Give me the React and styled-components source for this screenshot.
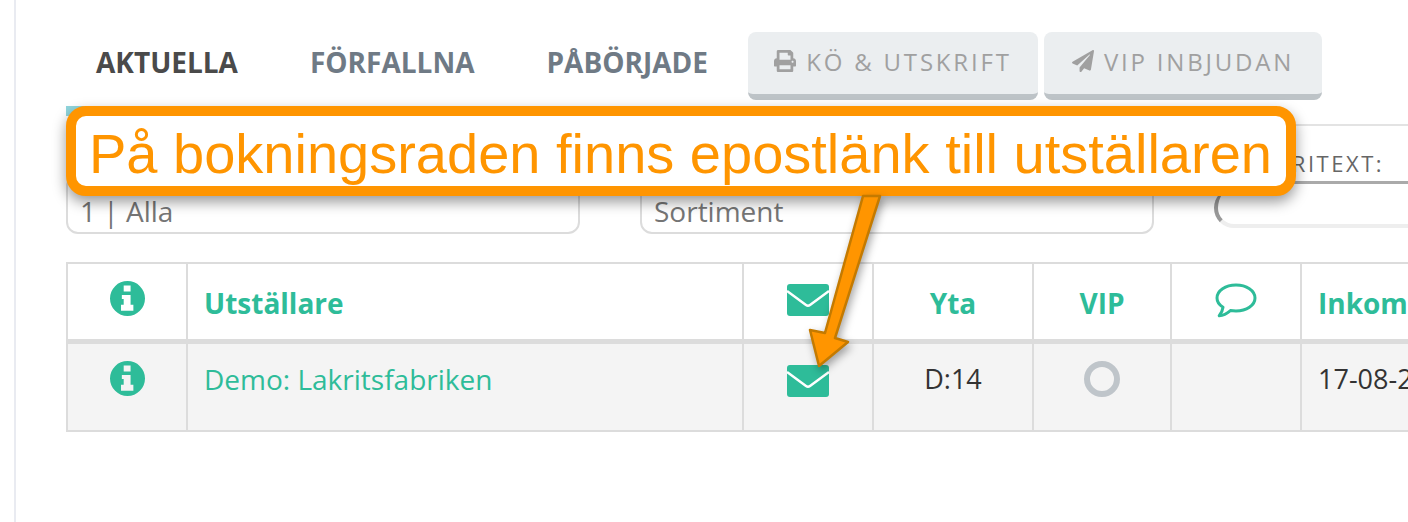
import styled, { createGlobalStyle } from "styled-components";
import { FaPrint, FaPaperPlane } from "react-icons/fa";

const GlobalStyle = createGlobalStyle`
  html, body {
    margin: 0;
    padding: 0;
    background: #fff;
    overflow: hidden;
  }
  body {
    font-family: "Open Sans", "Liberation Sans", sans-serif;
  }
`;

const Page = styled.div`
  position: relative;
  width: 1408px;
  height: 522px;
  overflow: hidden;
  box-sizing: border-box;
  background: #fff;
`;

const Content = styled.div`
  box-sizing: border-box;
  height: 522px;
  width: 1408px;
  margin-left: 14px;
  border-left: 2px solid #e9ebf1;
  padding: 32px 0 0 50px;
`;

const Tabs = styled.div`
  display: flex;
  align-items: flex-start;
  height: 68px;
  padding-left: 30px;
`;

const Tab = styled.div`
  font-size: 28px;
  font-weight: 700;
  line-height: 60px;
  color: ${(p) => (p.$active ? "#4a4a4a" : "#6f7a85")};
  margin-right: ${(p) => p.$gap}px;
`;

const ActionButton = styled.div`
  box-sizing: border-box;
  display: flex;
  align-items: center;
  justify-content: center;
  gap: 10px;
  width: ${(p) => p.$width}px;
  height: 68px;
  margin-right: 6px;
  padding-bottom: 4px;
  background: #ebeef0;
  border-bottom: 6px solid #bdc3c7;
  border-radius: 8px;
  color: #a0a0a0;
  font-size: 24px;
  font-weight: 400;
  letter-spacing: 2.8px;
`;

const Strip = styled.div`
  width: 40px;
  height: 10px;
  margin-top: 6px;
  background: #8fd5dc;
`;

const Filters = styled.div`
  display: flex;
  align-items: flex-start;
  height: 146px;
`;

const SelectBox = styled.div`
  box-sizing: border-box;
  width: 514px;
  height: 60px;
  margin-top: 58px;
  margin-right: 60px;
  padding: 16px 12px 0;
  border: 2px solid #dcdcdc;
  border-radius: 12px;
  background: #fff;
  color: #757575;
  font-size: 28px;
  font-weight: 400;
  line-height: 38px;
`;

const FreeText = styled.div`
  flex: 1;
  margin-top: 8px;
`;

const FreeLabel = styled.div`
  box-sizing: border-box;
  height: 60px;
  padding: 21px 0 0 62px;
  border-top: 2px solid #e3e3e3;
  border-left: 2px solid #e3e3e3;
  border-bottom: 3px solid #aaa;
  color: #666;
  font-size: 22px;
  letter-spacing: 2.5px;
  line-height: 32px;
`;

const FreeInput = styled.div`
  box-sizing: border-box;
  height: 40px;
  margin-top: 4px;
  border-left: 4px solid #999;
  border-bottom: 4px solid #eee;
  border-radius: 20px 0 0 20px;
`;

const Table = styled.table`
  table-layout: fixed;
  width: 1500px;
  border-collapse: collapse;
  background: #fff;
`;

const HeadCell = styled.th`
  box-sizing: border-box;
  height: 78px;
  padding: ${(p) => (p.$left ? "4px 0 0 16px" : "4px 0 0")};
  border: 2px solid #dcdcdc;
  border-bottom: 5px solid #dcdcdc;
  text-align: ${(p) => (p.$left ? "left" : "center")};
  color: #2ebc99;
  font-size: 28px;
  font-weight: 700;
  white-space: nowrap;
`;

const Cell = styled.td`
  box-sizing: border-box;
  height: 90px;
  padding: ${(p) => (p.$left ? "0 0 16px 16px" : "0 0 16px")};
  border: 2px solid #dcdcdc;
  background: #f4f4f4;
  text-align: ${(p) => (p.$left ? "left" : "center")};
  color: ${(p) => (p.$link ? "#2ebc99" : "#333")};
  font-size: ${(p) => (p.$link ? 28 : 27)}px;
  white-space: nowrap;
`;

const Ring = styled.span`
  display: block;
  box-sizing: border-box;
  width: 36px;
  height: 36px;
  margin: 0 auto;
  border: 6px solid #bfc5ca;
  border-radius: 50%;
`;

const IconSvg = styled.svg`
  display: block;
  margin: ${(p) => p.$top || 0}px auto ${(p) => p.$bottom || 0}px;
  fill: #2ebc99;
`;

const Callout = styled.div`
  position: absolute;
  left: 66px;
  top: 106px;
  box-sizing: border-box;
  width: 1230px;
  height: 90px;
  padding-left: 13px;
  background: #fff;
  border: 10px solid #ff9500;
  border-radius: 20px;
  box-shadow: 0 6px 14px rgba(0, 0, 0, 0.4);
  color: #ff9500;
  font-family: "Liberation Sans", Arial, sans-serif;
  font-size: 56px;
  line-height: 76px;
  white-space: nowrap;
`;

const ArrowSvg = styled.svg`
  position: absolute;
  left: 790px;
  top: 190px;
  filter: drop-shadow(2px 4px 4px rgba(0, 0, 0, 0.35));
`;

const InfoIcon = ({ bottom }) => (
  <IconSvg width="35" height="35" viewBox="0 0 34 34" $bottom={bottom}>
    <path
      fillRule="evenodd"
      d="M17 0a17 17 0 1 0 0 34a17 17 0 1 0 0-34zM13.300 4.300h6.700v6h-6.700zM11.500 13.500h8.500v9.500h2.700v6h-12v-6h2.600v-5.500h-1.800z"
    />
  </IconSvg>
);

const MailIcon = ({ top, bottom }) => (
  <IconSvg width="42" height="32" viewBox="0 0 42 32" $top={top} $bottom={bottom}>
    <rect width="42" height="32" rx="3" />
    <path d="M0 7 L19 21 Q21 22.500 23 21 L42 7" fill="none" stroke="#fff" strokeWidth="2.500" />
  </IconSvg>
);

const ChatIcon = () => (
  <IconSvg width="42" height="36" viewBox="0 0 42 36" $bottom={4}>
    <path
      d="M21 2C10.500 2 2 7.600 2 15c0 3.800 2.400 7 6 9.200-.4 3-1.800 6.200-3.800 8.600 4.500-.4 8.600-3 11.200-5.200 1.800.3 3.600.4 5.600.4 10.500 0 19-5.600 19-13S31.500 2 21 2z"
      fill="none"
      stroke="#2ebc99"
      strokeWidth="3"
      strokeLinejoin="round"
    />
  </IconSvg>
);

export default function App() {
  return (
    <Page>
      <GlobalStyle />
      <Content>
        <Tabs>
          <Tab $active $gap={72}>AKTUELLA</Tab>
          <Tab $gap={72}>FÖRFALLNA</Tab>
          <Tab $gap={40}>PÅBÖRJADE</Tab>
          <ActionButton $width={290}>
            <FaPrint size={22} />
            KÖ &amp; UTSKRIFT
          </ActionButton>
          <ActionButton $width={278}>
            <FaPaperPlane size={22} />
            VIP INBJUDAN
          </ActionButton>
        </Tabs>
        <Strip />
        <Filters>
          <SelectBox>1 | Alla</SelectBox>
          <SelectBox>Sortiment</SelectBox>
          <FreeText>
            <FreeLabel>FRITEXT:</FreeLabel>
            <FreeInput />
          </FreeText>
        </Filters>
        <Table>
          <colgroup>
            <col width="120" />
            <col width="556" />
            <col width="130" />
            <col width="160" />
            <col width="138" />
            <col width="130" />
            <col width="266" />
          </colgroup>
          <thead>
            <tr>
              <HeadCell><InfoIcon bottom={10} /></HeadCell>
              <HeadCell $left>Utställare</HeadCell>
              <HeadCell><MailIcon bottom={6} /></HeadCell>
              <HeadCell>Yta</HeadCell>
              <HeadCell>VIP</HeadCell>
              <HeadCell><ChatIcon /></HeadCell>
              <HeadCell $left>Inkommen</HeadCell>
            </tr>
          </thead>
          <tbody>
            <tr>
              <Cell $link><InfoIcon /></Cell>
              <Cell $left $link>Demo: Lakritsfabriken</Cell>
              <Cell $link><MailIcon top={4} /></Cell>
              <Cell>D:14</Cell>
              <Cell><Ring /></Cell>
              <Cell />
              <Cell $left>17-08-25</Cell>
            </tr>
          </tbody>
        </Table>
      </Content>
      <Callout>På bokningsraden finns epostlänk till utställaren</Callout>
      <ArrowSvg width="100" height="190" viewBox="790 190 100 190">
        <polygon
          points="863,196 880,196 835,338 848,342 819,366 810,330 825,333"
          fill="#ff9500"
          stroke="#c47a00"
          strokeWidth="2.500"
          strokeLinejoin="round"
        />
      </ArrowSvg>
    </Page>
  );
}
